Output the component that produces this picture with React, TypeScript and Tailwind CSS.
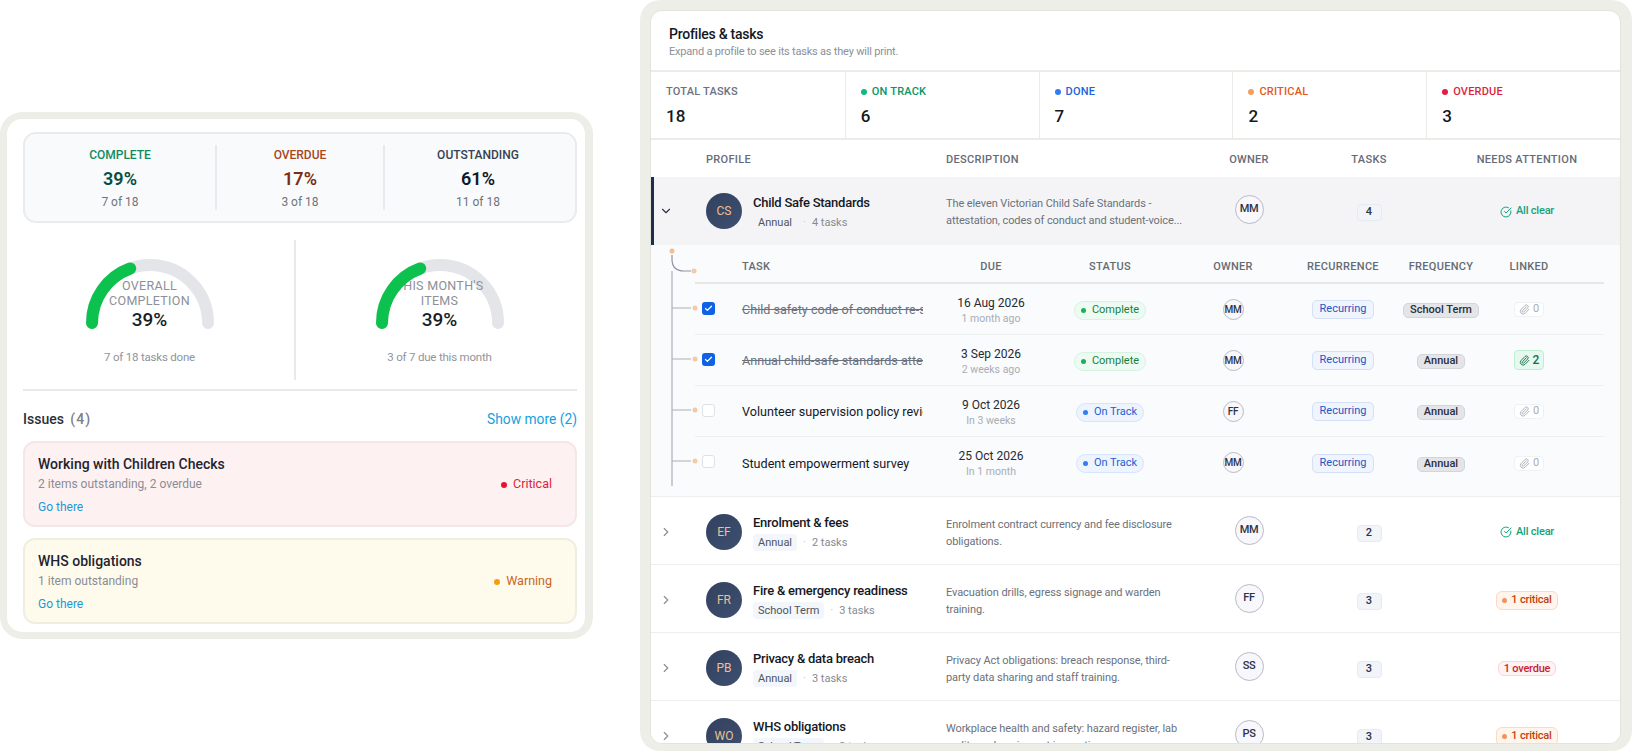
import React from 'react'
import { Check, ChevronDown, ChevronRight, CircleCheckBig, Paperclip } from 'lucide-react'

const summary = [
  { label: 'COMPLETE', value: '39%', sub: '7 of 18', labelColor: 'text-[#0f8a5f]', valueColor: 'text-[#064e3b]' },
  { label: 'OVERDUE', value: '17%', sub: '3 of 18', labelColor: 'text-[#a8481c]', valueColor: 'text-[#7c2d12]' },
  { label: 'OUTSTANDING', value: '61%', sub: '11 of 18', labelColor: 'text-[#374151]', valueColor: 'text-[#111827]' },
]

const counters = [
  { label: 'TOTAL TASKS', value: '18', dot: '', color: 'text-[#6b7280]' },
  { label: 'ON TRACK', value: '6', dot: 'bg-[#10b981]', color: 'text-[#059669]' },
  { label: 'DONE', value: '7', dot: 'bg-[#2f7df6]', color: 'text-[#1d63d8]' },
  { label: 'CRITICAL', value: '2', dot: 'bg-[#f59e63]', color: 'text-[#e2581a]' },
  { label: 'OVERDUE', value: '3', dot: 'bg-[#e11d48]', color: 'text-[#dc1f3c]' },
]

const tasks = [
  { name: 'Child safety code of conduct re-sign-off', date: '16 Aug 2026', when: '1 month ago', status: 'Complete', owner: 'MM', freq: 'School Term', linked: 0, done: true },
  { name: 'Annual child-safe standards attestation', date: '3 Sep 2026', when: '2 weeks ago', status: 'Complete', owner: 'MM', freq: 'Annual', linked: 2, done: true },
  { name: 'Volunteer supervision policy review', date: '9 Oct 2026', when: 'In 3 weeks', status: 'On Track', owner: 'FF', freq: 'Annual', linked: 0, done: false },
  { name: 'Student empowerment survey', date: '25 Oct 2026', when: 'In 1 month', status: 'On Track', owner: 'MM', freq: 'Annual', linked: 0, done: false },
]

const profiles = [
  { initials: 'EF', name: 'Enrolment & fees', freq: 'Annual', count: 2, line1: 'Enrolment contract currency and fee disclosure', line2: 'obligations.', owner: 'MM', attention: 'clear' },
  { initials: 'FR', name: 'Fire & emergency readiness', freq: 'School Term', count: 3, line1: 'Evacuation drills, egress signage and warden', line2: 'training.', owner: 'FF', attention: 'critical' },
  { initials: 'PB', name: 'Privacy & data breach', freq: 'Annual', count: 3, line1: 'Privacy Act obligations: breach response, third-', line2: 'party data sharing and staff training.', owner: 'SS', attention: 'overdue' },
  { initials: 'WO', name: 'WHS obligations', freq: 'School Term', count: 3, line1: 'Workplace health and safety: hazard register, lab', line2: 'audits and equipment inspections.', owner: 'PS', attention: 'critical' },
]

const profileGrid = 'grid grid-cols-[55px_240px_248px_110px_130px_186px]'
const taskGrid = 'grid grid-cols-[47px_193px_112px_126px_120px_100px_96px_80px_1fr]'

const Gauge = ({ lines, note }: { lines: string[]; note: string }) => (
  <div className="flex flex-col items-center">
    <div className="relative h-[70px] w-[128px]">
      <svg className="absolute top-0 left-0" width="128" height="70" viewBox="0 0 128 70" fill="none" strokeWidth="12" strokeLinecap="round">
        <path d="M6 64 A58 58 0 0 1 122 64" stroke="#e3e5e9" />
      </svg>
      <div className="relative flex h-full flex-col items-center pt-[19px] text-center">
        {lines.map((line) => (
          <span key={line} className="whitespace-nowrap text-[12.5px] leading-[15px] tracking-[0.3px] text-[#8b9099]">{line}</span>
        ))}
        <span className="text-[19px] leading-[24px] font-medium text-[#1a1d24]">39%</span>
      </div>
      <svg className="absolute top-0 left-0" width="128" height="70" viewBox="0 0 128 70" fill="none" strokeWidth="12" strokeLinecap="round">
        <path d="M6 64 A58 58 0 0 1 44.2 9.5" stroke="#0cc14d" />
      </svg>
    </div>
    <div className="mt-[20px] text-[11.5px] leading-4 tracking-[-0.2px] text-[#8f949c]">{note}</div>
  </div>
)

const IssueCard = ({ title, sub, level, tone }: { title: string; sub: string; level: string; tone: string }) => (
  <div className={`flex h-[86px] items-center justify-between rounded-[12px] border-2 pr-[23px] pl-[13px] ${tone === 'red' ? 'border-[#f5e6e8] bg-[#fef1f2]' : 'border-[#efeee0] bg-[#fefbec]'}`}>
    <div className="pt-[2px]">
      <div className="text-[14px] leading-5 font-medium text-[#1f2430]">{title}</div>
      <div className="mt-[2px] text-[12px] leading-4 text-[#8a8d94]">{sub}</div>
      <div className="mt-[5px] text-[12px] leading-5 text-[#1a9ad6]">Go there</div>
    </div>
    <div className={`flex items-center gap-[6px] pt-[1px] text-[12.5px] ${tone === 'red' ? 'text-[#dc1f3c]' : 'text-[#c9651c]'}`}>
      <span className={`h-[6px] w-[6px] rounded-full ${tone === 'red' ? 'bg-[#e8112d]' : 'bg-[#f59e0b]'}`}></span>
      {level}
    </div>
  </div>
)

const ProgressCard = () => (
  <section className="mt-[112px] h-[527px] w-[593px] shrink-0 rounded-[22px] border-[7px] border-r-[8px] border-[#eeeee8] bg-white pt-[13px] pr-[8px] pl-[16px]">
    <div className="grid h-[91px] grid-cols-[190px_168px_1fr] items-center rounded-[13px] border-2 border-[#e9ebec] bg-[#f9fafc]">
      {summary.map((item, i) => (
        <div key={item.label} className={`flex h-[65px] flex-col items-center justify-between ${i > 0 ? 'border-l-2 border-[#e8eaed]' : ''} ${i === 2 ? 'pr-[4px]' : ''}`}>
          <span className={`pt-[2px] text-[12px] leading-[16px] font-medium ${item.labelColor}`}>{item.label}</span>
          <span className={`text-[18px] leading-[22px] font-semibold ${item.valueColor}`}>{item.value}</span>
          <span className="text-[12px] leading-[16px] text-[#6f747c]">{item.sub}</span>
        </div>
      ))}
    </div>
    <div className="mt-[17px] flex h-[140px]">
      <div className="flex w-[273px] justify-center border-r-2 border-[#e8e9eb] pt-[19px] pr-[18px]">
        <Gauge lines={['OVERALL', 'COMPLETION']} note="7 of 18 tasks done" />
      </div>
      <div className="flex flex-1 justify-center pt-[19px] pl-[6px]">
        <Gauge lines={["THIS MONTH'S", 'ITEMS']} note="3 of 7 due this month" />
      </div>
    </div>
    <div className="mt-[9px] h-[2px] bg-[#e8e9eb]"></div>
    <div className="mt-[18px] flex h-[20px] items-center justify-between">
      <div className="text-[14px] font-medium text-[#2b2f38]">
        Issues <span className="ml-[3px] tracking-[1px] text-[#7c8088]">(4)</span>
      </div>
      <div className="text-[13.8px] text-[#169fdc]">Show more (2)</div>
    </div>
    <div className="mt-[12px] flex flex-col gap-[11px]">
      <IssueCard title="Working with Children Checks" sub="2 items outstanding, 2 overdue" level="Critical" tone="red" />
      <IssueCard title="WHS obligations" sub="1 item outstanding" level="Warning" tone="amber" />
    </div>
  </section>
)

const Avatar = ({ initials }: { initials: string }) => (
  <div className="flex h-[36px] w-[36px] shrink-0 items-center justify-center rounded-full bg-gradient-to-br from-[#33415f] to-[#3d4f70] text-[12px] text-[#eec08f]">
    {initials}
  </div>
)

const OwnerCircle = ({ initials, small }: { initials: string; small?: boolean }) => (
  <div className={`flex items-center justify-center rounded-full border border-[#b9bac4] bg-[#f8f7fc] font-medium tracking-[-0.3px] text-[#2e3345] ${small ? 'h-[21px] w-[21px] text-[10px]' : 'h-[29px] w-[29px] text-[11px]'}`}>
    {initials}
  </div>
)

const Attention = ({ kind }: { kind: string }) => {
  if (kind === 'clear') {
    return (
      <span className="flex items-center gap-[4px] text-[11px] font-medium tracking-[-0.2px] text-[#16a27a]">
        <CircleCheckBig size={12} strokeWidth={2} />
        All clear
      </span>
    )
  }
  if (kind === 'overdue') {
    return <span className="rounded-[6px] border border-[#fad5da] bg-[#fef2f3] px-[5px] text-[11px] leading-[13px] font-medium tracking-[-0.2px] text-[#c81e2e]">1 overdue</span>
  }
  return (
    <span className="flex h-[19px] items-center gap-[4px] rounded-[6px] border border-[#fcd9bf] bg-[#fff5ec] px-[5px] text-[11px] font-medium tracking-[-0.2px] text-[#c2410c]">
      <span className="h-[5px] w-[5px] rounded-full bg-[#f2935c]"></span>
      1 critical
    </span>
  )
}

const ProfileRow = ({ initials, name, freq, count, line1, line2, owner, attention, open }: {
  initials: string; name: string; freq: string; count: number; line1: string; line2: string; owner: string; attention: string; open?: boolean
}) => (
  <div className={`${profileGrid} h-[68px] shrink-0 items-center ${open ? 'bg-[#f4f4f6] shadow-[inset_3px_0_0_#1e2f4d]' : 'border-b border-[#eceef0] bg-white pt-[2px]'}`}>
    <div className="pl-[8px]">
      {open ? <ChevronDown size={14} className="text-[#2e3345]" /> : <ChevronRight size={14} className="text-[#8b8f96]" />}
    </div>
    <div className="flex items-center gap-[11px]">
      <Avatar initials={initials} />
      <div className="pt-[2px]">
        <div className="text-[13px] leading-[18px] font-medium tracking-[-0.25px] whitespace-nowrap text-[#15181f]">{name}</div>
        <div className="mt-[2px] flex items-center text-[11px] leading-[17px]">
          <span className={`rounded-[4px] px-[5px] text-[#4b5563] ${open ? '' : 'bg-[#f3f6fa]'}`}>{freq}</span>
          <span className="mx-[6px] text-[#c4c7cc]">·</span>
          <span className="text-[#868b93]">{count} tasks</span>
        </div>
      </div>
    </div>
    <div className="pt-[2px] text-[11px] leading-[17px] tracking-[-0.1px] whitespace-nowrap text-[#6c717a]">
      {line1}
      <br />
      {line2}
    </div>
    <div className="flex justify-center pb-[3px]">
      <OwnerCircle initials={owner} />
    </div>
    <div className="flex justify-center pt-[3px]">
      <span className="flex h-[17px] w-[25px] items-center justify-center rounded-[4px] border border-[#e6eaf1] bg-[#f1f4f9] text-[11px] font-medium text-[#2e3345]">{count}</span>
    </div>
    <div className="flex justify-center pt-[1px]">
      <Attention kind={attention} />
    </div>
  </div>
)

const StatusPill = ({ status }: { status: string }) => {
  const complete = status === 'Complete'
  return (
    <span className={`flex h-[19px] items-center gap-[6px] rounded-full border px-[6px] text-[11px] ${complete ? 'border-[#d6f3e1] bg-[#eefbf3] text-[#15803d]' : 'border-[#d7e4fb] bg-[#eef4fe] text-[#1d5fd0]'}`}>
      <span className={`h-[5px] w-[5px] rounded-full ${complete ? 'bg-[#16b358]' : 'bg-[#2f7df6]'}`}></span>
      {status}
    </span>
  )
}

const TaskRow = ({ task, last }: { task: (typeof tasks)[number]; last: boolean }) => (
  <div className={`${taskGrid} h-[51px] items-center ${last ? '' : 'border-b border-[#eef0f0]'}`}>
    <div className="pb-[2px] pl-[7px]">
      {task.done ? (
        <span className="flex h-[13px] w-[13px] items-center justify-center rounded-[3px] bg-[#0f62e6] text-white">
          <Check size={9} strokeWidth={3.5} />
        </span>
      ) : (
        <span className="block h-[13px] w-[13px] rounded-[3px] border border-[#dfe1e4] bg-white"></span>
      )}
    </div>
    <div className={`w-[181px] overflow-hidden pt-[3px] text-[12.6px] whitespace-nowrap ${task.done ? 'text-[#6b7280] line-through' : 'text-[#15181f]'}`}>{task.name}</div>
    <div className="pt-[3px] text-center">
      <div className="text-[12px] leading-[15px] text-[#262a33]">{task.date}</div>
      <div className="text-[10.5px] leading-[15px] text-[#a9adb4]">{task.when}</div>
    </div>
    <div className="flex justify-center pt-[2px]">
      <StatusPill status={task.status} />
    </div>
    <div className="flex justify-center">
      <OwnerCircle initials={task.owner} small />
    </div>
    <div className="flex justify-center pt-[1px]">
      <span className="flex h-[19px] w-[62px] items-center justify-center rounded-[5px] border border-[#d3e0f8] bg-[#eff4fd] text-[11px] text-[#1f56c3]">Recurring</span>
    </div>
    <div className="flex justify-center pt-[3px]">
      <span className="flex h-[15px] items-center rounded-[5px] border border-[#d3d5da] bg-[#e4e5e9] px-[6px] text-[11px] font-medium text-[#2a2f3c]">{task.freq}</span>
    </div>
    <div className={`flex justify-center ${task.linked ? '' : 'pt-[1px]'}`}>
      <span className={`flex items-center justify-center gap-[3px] rounded-[4px] border ${task.linked ? 'h-[20px] w-[30px] border-[#bdeed2] bg-[#e6f9ef] text-[12px] font-medium text-[#12704a]' : 'h-[15px] w-[30px] border-[#f0f1f3] bg-white text-[11px] text-[#a8acb3]'}`}>
        <Paperclip size={11} strokeWidth={2} />
        {task.linked}
      </span>
    </div>
  </div>
)

const TaskTree = () => (
  <svg className="absolute top-0 left-0" width="52" height="252" viewBox="0 0 52 252" fill="none">
    <path d="M21 10 V14 Q21 26 33 26 H40" stroke="#8d93a1" strokeWidth="1.2" />
    <path d="M21 26 V241" stroke="#a9adb8" strokeWidth="1.2" />
    {[63, 114, 165, 216].map((y) => (
      <g key={y}>
        <path d={`M21 ${y} H40`} stroke="#a9adb8" strokeWidth="1" />
        <circle cx="44" cy={y} r="2.5" fill="#f4c9a4" />
      </g>
    ))}
    <circle cx="21" cy="6" r="2.5" fill="#f2bf92" />
    <circle cx="43" cy="26" r="2.5" fill="#f4c9a4" />
  </svg>
)

const ProfilesCard = () => (
  <section className="ml-[47px] h-[751px] w-[992px] shrink-0 rounded-[20px] border-t-[10px] border-r-[11px] border-b-[7px] border-l-[10px] border-[#eeeee8] bg-[#eeeee8]">
    <div className="flex h-full flex-col overflow-hidden rounded-[12px] border border-[#e3e3de] bg-white">
      <header className="h-[61px] shrink-0 border-b-2 border-[#ebebe7] pt-[14px] pl-[18px]">
        <h2 className="text-[14px] leading-[19px] font-medium tracking-[-0.25px] text-[#15181f]">Profiles &amp; tasks</h2>
        <p className="text-[11px] leading-[15px] tracking-[-0.2px] text-[#8b9098]">Expand a profile to see its tasks as they will print.</p>
      </header>
      <div className="grid h-[68px] shrink-0 grid-cols-5 border-b-2 border-[#ebebe7]">
        {counters.map((c, i) => (
          <div key={c.label} className={`pt-[12px] ${i === 0 ? 'pl-[15px]' : 'border-l border-[#ebebe7] pl-[15px]'}`}>
            <div className={`flex items-center gap-[5px] text-[11px] leading-[16px] font-medium tracking-[0.2px] ${c.color}`}>
              {c.dot && <span className={`h-[6px] w-[6px] rounded-full ${c.dot}`}></span>}
              {c.label}
            </div>
            <div className="mt-[5px] text-[17px] leading-[22px] font-medium text-[#15181f]">{c.value}</div>
          </div>
        ))}
      </div>
      <div className={`${profileGrid} h-[37px] shrink-0 items-center pt-[3px] text-[11px] font-medium tracking-[0.3px] text-[#666b78]`}>
        <div></div>
        <div>PROFILE</div>
        <div>DESCRIPTION</div>
        <div className="text-center">OWNER</div>
        <div className="text-center">TASKS</div>
        <div className="text-center">NEEDS ATTENTION</div>
      </div>
      <ProfileRow
        open
        initials="CS"
        name="Child Safe Standards"
        freq="Annual"
        count={4}
        line1="The eleven Victorian Child Safe Standards -"
        line2="attestation, codes of conduct and student-voice..."
        owner="MM"
        attention="clear"
      />
      <div className="relative h-[252px] shrink-0 border-b border-[#eceef0] bg-[#f9fbfd] pr-[16px] pl-[44px]">
        <TaskTree />
        <div className={`${taskGrid} h-[39px] items-end border-b-2 border-[#e6e7e6] pb-[8px] text-[11px] leading-[14px] font-medium tracking-[0.3px] text-[#666b72]`}>
          <div></div>
          <div>TASK</div>
          <div className="text-center">DUE</div>
          <div className="text-center">STATUS</div>
          <div className="text-center">OWNER</div>
          <div className="text-center">RECURRENCE</div>
          <div className="text-center">FREQUENCY</div>
          <div className="text-center">LINKED</div>
        </div>
        {tasks.map((task, i) => (
          <TaskRow key={task.name} task={task} last={i === tasks.length - 1} />
        ))}
      </div>
      {profiles.map((p) => (
        <ProfileRow key={p.initials} {...p} />
      ))}
    </div>
  </section>
)

function App() {
  return (
    <div className="flex h-[751px] w-[1632px] items-start overflow-hidden bg-white font-['Roboto',sans-serif]">
      <ProgressCard />
      <ProfilesCard />
    </div>
  )
}

export default App
